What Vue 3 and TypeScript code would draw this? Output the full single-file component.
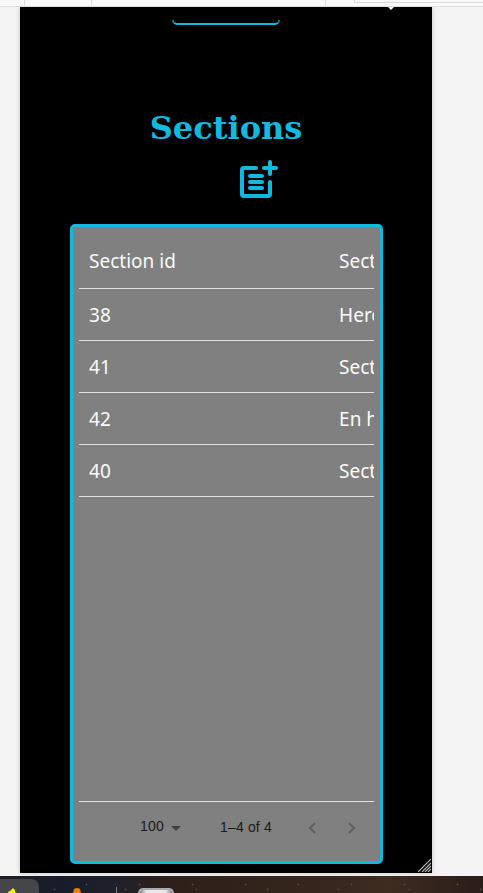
<script setup lang="ts">
interface Section {
  id: number
  name: string
}

const columns: string[] = ['Section id', 'Section name']

const sections: Section[] = [
  { id: 38, name: 'Hero' },
  { id: 41, name: 'Section' },
  { id: 42, name: 'En h' },
  { id: 40, name: 'Section' },
]

const pageSize = 100
</script>

<template>
  <div class="screen">
    <header class="toolbar">
      <span class="tab first"></span>
      <span class="tab second"></span>
      <span class="tab third"></span>
      <span class="popup"></span>
    </header>

    <div class="stage">
      <main class="viewport">
        <span class="pointer"></span>
        <div class="button-edge"></div>
        <h1>Sections</h1>
        <svg class="add" viewBox="0 0 38 38" fill="none" stroke="#12b9df" stroke-width="4" stroke-linecap="round" stroke-linejoin="round">
          <path d="M16 8H4Q2 8 2 10V34Q2 36 4 36H28Q30 36 30 34V22" />
          <path d="M24 8H36M30 2V14" />
          <path d="M10 16H22M10 22H22M10 28H22" />
        </svg>

        <section class="grid">
          <div class="row head">
            <span v-for="column in columns" :key="column" class="cell">{{ column }}</span>
          </div>
          <div v-for="section in sections" :key="section.id" class="row">
            <span class="cell">{{ section.id }}</span>
            <span class="cell">{{ section.name }}</span>
          </div>
          <div class="space"></div>
          <footer class="pager">
            <span class="size">{{ pageSize }}</span>
            <svg class="caret" viewBox="0 0 10 5"><path d="M0 0H10L5 5Z" fill="#404040" /></svg>
            <span class="range">1–{{ sections.length }} of {{ sections.length }}</span>
            <svg class="chevron" viewBox="0 0 8 12"><path d="M7 1L2 6L7 11" /></svg>
            <svg class="chevron next" viewBox="0 0 8 12"><path d="M1 1L6 6L1 11" /></svg>
          </footer>
        </section>

        <svg class="resize" viewBox="0 0 13 13" stroke="#c4c4c4" stroke-width="1.1">
          <path d="M0 13L13 0M4 13L13 4M7 13L13 7M10 13L13 10" />
        </svg>
      </main>
    </div>

    <div class="dock">
      <span class="tile">
        <svg viewBox="0 0 14 5"><path d="M2 5V4L4 3L7 0L9 2V4L11 5Z" fill="#f5ed16" /></svg>
      </span>
      <svg class="cone" viewBox="0 0 10 5"><path d="M1 5L2 1Q5 -1 8 1L9 5Z" fill="#f47b09" /></svg>
      <span class="separator"></span>
      <span class="drive"></span>
    </div>
  </div>
</template>

<style>
body {
  overflow: hidden;
}
</style>

<style scoped>
.screen {
  width: 483px;
  height: 893px;
  display: flex;
  flex-direction: column;
  overflow: hidden;
  background: #f4f4f4;
}

.toolbar {
  height: 7px;
  flex: none;
  box-sizing: border-box;
  display: flex;
  background: #f9f9f9;
  border-bottom: 1px solid #dcdfde;
}

.tab {
  box-sizing: border-box;
  border-right: 1px solid #dcdfde;
}

.first {
  width: 25px;
}

.second {
  width: 67px;
}

.third {
  width: 234px;
}

.popup {
  flex: 1;
  height: 3px;
  margin-left: 28px;
  box-sizing: border-box;
  border-left: 1px solid #d9d9d9;
  border-bottom: 1px solid #d9d9d9;
}

.stage {
  height: 869px;
  flex: none;
  padding: 0 51px 0 20px;
}

.viewport {
  position: relative;
  width: 412px;
  height: 866px;
  display: flex;
  flex-direction: column;
  align-items: center;
  background: #000;
  box-shadow: 0 0 5px rgba(0, 0, 0, 0.2);
  clip-path: inset(0 -8px -3px -8px);
}

.pointer {
  position: absolute;
  top: 0;
  left: 368px;
  border: solid transparent;
  border-width: 3px 3px 0;
  border-top-color: #f9f9f9;
}

.button-edge {
  width: 108px;
  height: 5px;
  flex: none;
  box-sizing: border-box;
  margin-top: 13px;
  border: 2px solid #12b9df;
  border-top: 0;
  border-radius: 0 0 5px 5px;
  border-left-color: #087d98;
  border-right-color: #087d98;
}

h1 {
  margin: 83px 0 0;
  height: 40px;
  flex: none;
  font: bold 32px/40px "DejaVu Serif", serif;
  color: #12b9df;
}

.add {
  width: 38px;
  height: 38px;
  flex: none;
  margin: 12px 0 0 66px;
}

.grid {
  width: 313px;
  height: 640px;
  flex: none;
  box-sizing: border-box;
  margin-top: 26px;
  padding: 0 6px;
  display: flex;
  flex-direction: column;
  border: 3px solid #12b9df;
  border-radius: 5px;
  background: #808080;
}

.row {
  height: 52px;
  flex: none;
  box-sizing: border-box;
  display: flex;
  align-items: center;
  overflow: hidden;
  border-bottom: 1px solid #e0e0e0;
  font-family: "Noto Sans", sans-serif;
  font-size: 19px;
  letter-spacing: 0;
  color: #fafafa;
}

.head {
  height: 62px;
  padding-top: 7px;
}

.cell {
  width: 250px;
  flex: none;
  box-sizing: border-box;
  padding-left: 10.6px;
  white-space: nowrap;
}

.space {
  flex: 1;
}

.pager {
  height: 60px;
  flex: none;
  box-sizing: border-box;
  padding: 0 18px 8px 61.6px;
  display: flex;
  align-items: center;
  border-top: 1px solid #e0e0e0;
  font: 14px/20px "Liberation Sans", sans-serif;
  letter-spacing: 0.15px;
  color: #1a1a1a;
}

.size {
  width: 31.4px;
  flex: none;
  padding-bottom: 3px;
}

.caret {
  width: 10px;
  height: 5px;
  flex: none;
  margin-top: 2px;
}

.range {
  width: 88px;
  flex: none;
  margin-left: 38.6px;
  padding-bottom: 2px;
  white-space: nowrap;
}

.chevron {
  width: 8px;
  height: 12px;
  flex: none;
  fill: none;
  stroke: #606060;
  stroke-width: 2;
}

.next {
  margin-left: 32px;
}

.resize {
  position: absolute;
  right: 1px;
  bottom: 1px;
  width: 13px;
  height: 13px;
}

.dock {
  height: 17px;
  flex: none;
  display: flex;
  align-items: flex-end;
  background:
    radial-gradient(circle, #62513f 0 0.5px, transparent 1.2px) 7px 3px / 53px 11px,
    radial-gradient(circle, #504438 0 0.5px, transparent 1.4px) 19px 5px / 71px 17px,
    linear-gradient(90deg, #202026, #171c2b 12%, #20202a 24%, #2d201a 34%, #35251d 65%, #3e2c20 80%, #291d1a);
}

.tile {
  width: 39px;
  height: 14px;
  display: flex;
  align-items: flex-end;
  padding-left: 6px;
  box-sizing: border-box;
  background: #45464a;
  border-radius: 0 8px 0 0;
}

.tile svg {
  width: 14px;
  height: 5px;
}

.cone {
  width: 10px;
  height: 5px;
  margin-left: 33px;
}

.separator {
  width: 1px;
  height: 6px;
  margin-left: 34px;
  background: #77777d;
}

.drive {
  width: 36px;
  height: 5px;
  margin-left: 21px;
  box-sizing: border-box;
  border: 2px solid #aaaaaf;
  border-bottom: 0;
  border-radius: 5px 5px 0 0;
  background: linear-gradient(90deg, #85858a, #e8e8ea 20%, #e8e8ea 80%, #85858a);
}
</style>
